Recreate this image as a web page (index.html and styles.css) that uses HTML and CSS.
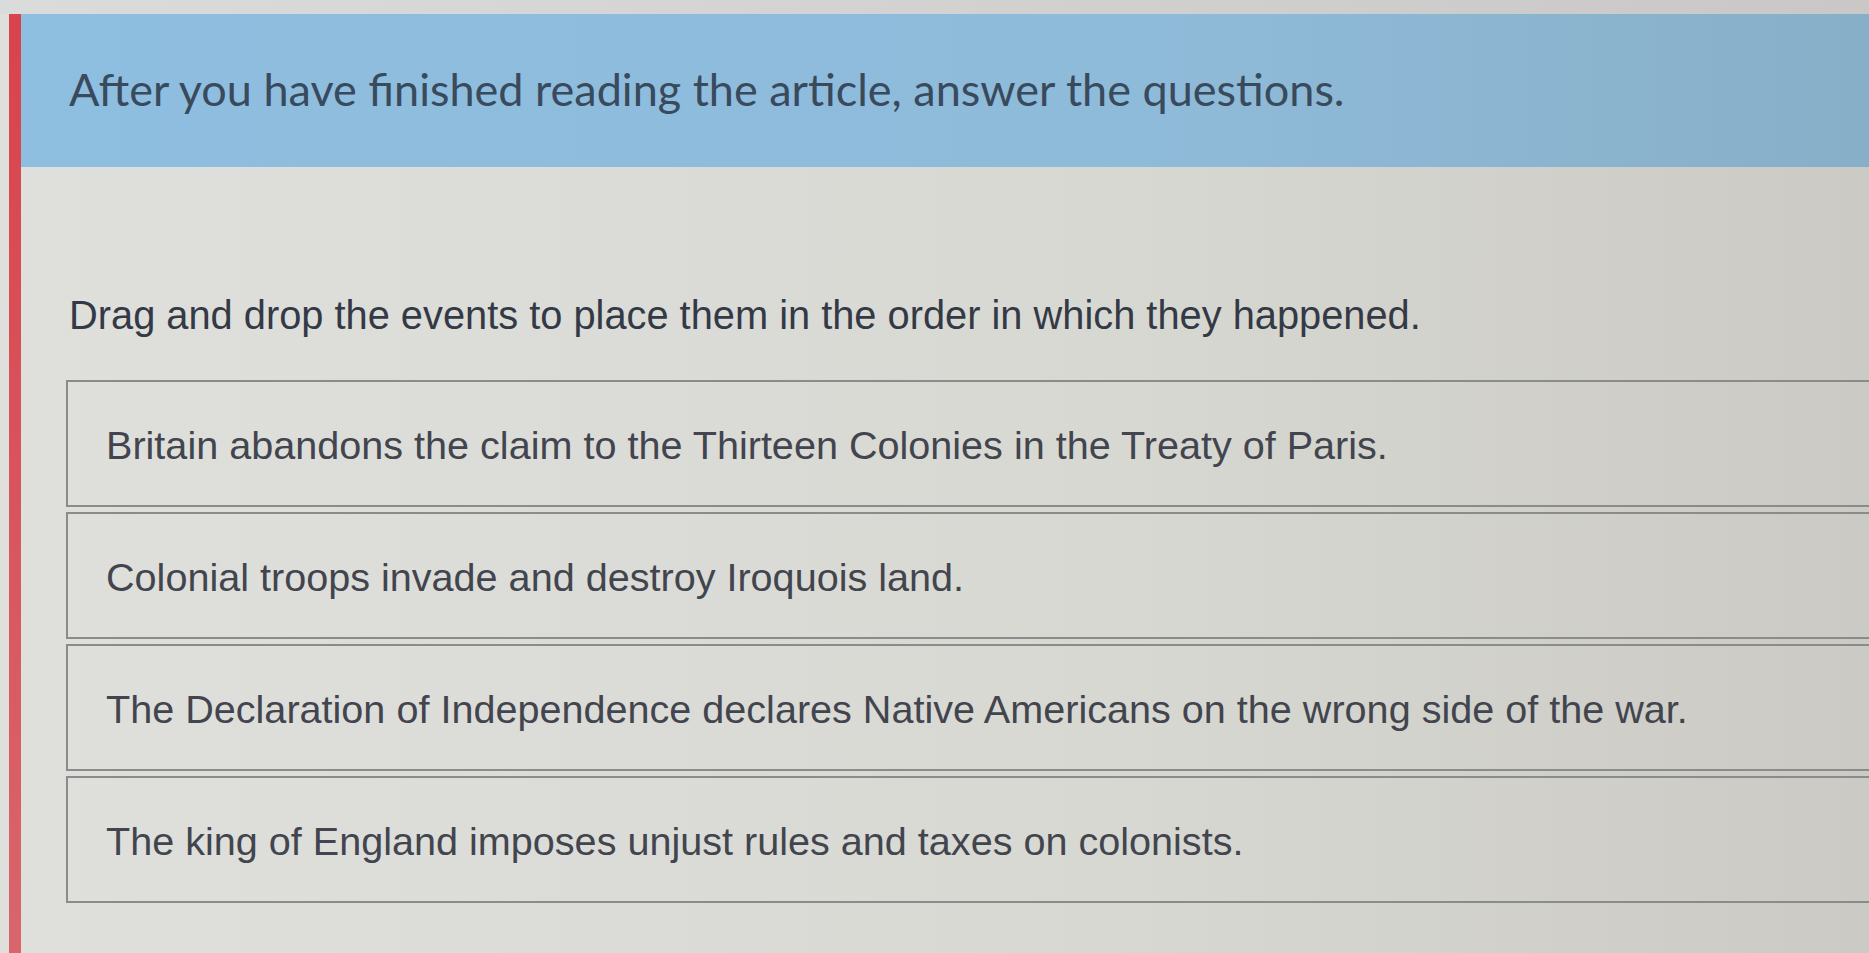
FILE: index.html
```html
<!DOCTYPE html>
<html lang="en">
<head>
    <meta charset="UTF-8">
    <meta name="viewport" content="width=device-width, initial-scale=1.0">
    <title>Ordering Activity</title>
    <link rel="stylesheet" href="styles.css">
</head>
<body>

    <!-- Top strip -->
    <div class="top-strip"></div>

    <div class="page">
        <!-- Red accent bar -->
        <div class="accent-bar"></div>

        <div class="content">
            <!-- Header -->
            <div class="header-container">
                <h1>After you have finished reading the article, answer the questions.</h1>
            </div>

            <!-- Question -->
            <div class="question">
                <p class="prompt">Drag and drop the events to place them in the order in which they happened.</p>

                <div class="event-list">
                    <div class="event-item">Britain abandons the claim to the Thirteen Colonies in the Treaty of Paris.</div>
                    <div class="event-item">Colonial troops invade and destroy Iroquois land.</div>
                    <div class="event-item">The Declaration of Independence declares Native Americans on the wrong side of the war.</div>
                    <div class="event-item">The king of England imposes unjust rules and taxes on colonists.</div>
                </div>
            </div>
        </div>
    </div>

</body>
</html>
```

FILE: styles.css
```css
/* body */
body {
    margin: 0;
    padding: 0;
    background: linear-gradient(to right, #dfe0dc, #d8d8d3 60%, #cbcac4);
    font-family: 'Liberation Sans', Arial, sans-serif;
    overflow: hidden;
    height: 953px;
}

/* Top strip */
.top-strip {
    height: 14px;
    background: linear-gradient(to right, #dadcdc, #c9c8c6);
}

/* Page */
.page {
    display: flex;
    padding-left: 9px;
    min-height: 939px;
}

.accent-bar {
    width: 12px;
    flex-shrink: 0;
    background: linear-gradient(to bottom, #d8434d, #d9656c);
}

.content {
    flex: 1;
}

/* Header */
.header-container {
    background: linear-gradient(to right, #8ebee0, #8fbbda 60%, #88afc8);
    height: 153px;
    display: flex;
    align-items: center;
    padding-left: 48px;
}

.header-container h1 {
    margin: 0 0 4px 0;
    font-family: 'Lato', sans-serif;
    font-weight: 400;
    font-size: 45px;
    color: #394a5c;
}

/* Question */
.question {
    padding: 126px 0 0 45px;
}

.prompt {
    margin: 0 0 42px 3px;
    font-size: 39.8px;
    color: #343946;
}

/* Event list */
.event-list {
    display: flex;
    flex-direction: column;
    gap: 5px;
}

.event-item {
    height: 127px;
    display: flex;
    align-items: center;
    padding-left: 38px;
    padding-top: 4px;
    box-sizing: border-box;
    border: 2px solid #8a8c8b;
    border-right: none;
    font-size: 39.6px;
    color: #42454e;
}
```
